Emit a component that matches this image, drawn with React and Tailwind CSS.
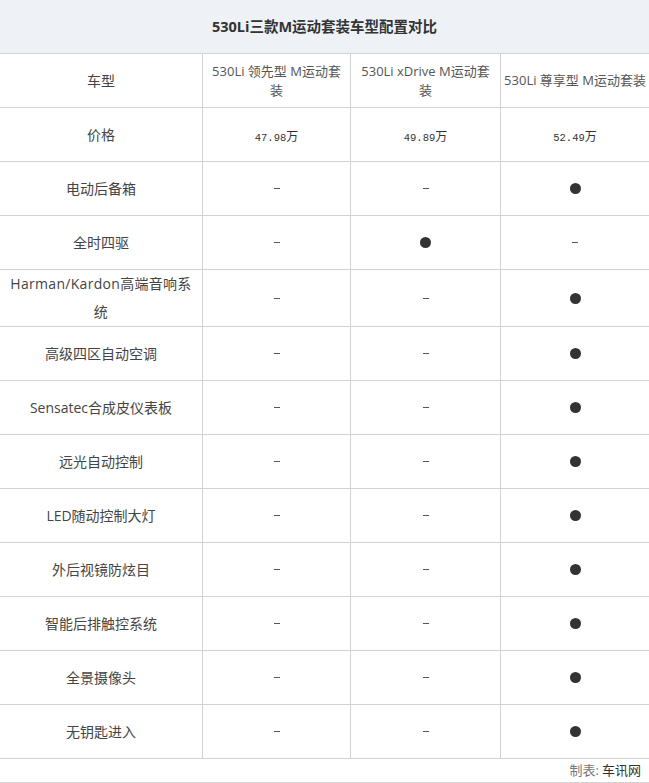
import React from 'react';

const cjk = { fontFamily: '"Open Sans", "Noto Sans CJK SC", sans-serif' };

const Dash = () => <span className="inline-block w-[6px] h-px bg-[#555]" />;
const Dot = () => <span className="inline-block w-[11px] h-[11px] rounded-full bg-[#333]" />;

const rows = [
  { label: '电动后备箱', v: [0, 0, 1] },
  { label: '全时四驱', v: [0, 1, 0] },
  { label: <>Harman/Kardon高端音响系<br />统</>, v: [0, 0, 1], tall: true },
  { label: '高级四区自动空调', v: [0, 0, 1] },
  { label: 'Sensatec合成皮仪表板', v: [0, 0, 1] },
  { label: '远光自动控制', v: [0, 0, 1] },
  { label: 'LED随动控制大灯', v: [0, 0, 1] },
  { label: '外后视镜防炫目', v: [0, 0, 1] },
  { label: '智能后排触控系统', v: [0, 0, 1] },
  { label: '全景摄像头', v: [0, 0, 1] },
  { label: '无钥匙进入', v: [0, 0, 1] },
];

const Row = ({ h = 'h-[54px]', children }) => (
  <div className={`grid grid-cols-[202px_148px_150px_149px] border-b border-[#d2d2d2] ${h}`}>
    {children}
  </div>
);

const Cell = ({ first, children, className = '' }) => (
  <div className={`flex items-center justify-center text-center ${first ? '' : 'border-l border-[#d2d2d2]'} ${className}`}>
    {children}
  </div>
);

const Price = ({ n }) => (
  <span className="text-[#333]">
    <span className="text-[10.5px]" style={{ fontFamily: '"Liberation Mono", monospace' }}>{n}</span>
    <span className="text-[12px]">万</span>
  </span>
);

export default function App() {
  return (
    <div className="w-[649px] bg-white text-[#333]" style={cjk}>
      <div className="h-[54px] bg-[#eef2f7] border-b border-[#d2d2d2] flex items-center justify-center">
        <span className="text-[14.5px] font-bold text-[#333]">530Li三款M运动套装车型配置对比</span>
      </div>

      <Row>
        <Cell first className="text-[14px] text-[#444]">车型</Cell>
        <Cell className="text-[13px] leading-[19px] text-[#555]">530Li 领先型 M运动套<br />装</Cell>
        <Cell className="text-[13px] leading-[19px] text-[#555]">530Li xDrive M运动套<br />装</Cell>
        <Cell className="text-[13px] text-[#555] whitespace-nowrap">530Li 尊享型 M运动套装</Cell>
      </Row>

      <Row>
        <Cell first className="text-[14px] text-[#444]">价格</Cell>
        <Cell><Price n="47.98" /></Cell>
        <Cell><Price n="49.89" /></Cell>
        <Cell><Price n="52.49" /></Cell>
      </Row>

      {rows.map((r, i) => (
        <Row key={i} h={r.tall ? 'h-[57px]' : 'h-[54px]'}>
          <Cell first className={`text-[14px] text-[#444] ${r.tall ? 'leading-[28px] tracking-[0.3px]' : ''}`}>{r.label}</Cell>
          {r.v.map((x, j) => (
            <Cell key={j}>{x ? <Dot /> : <Dash />}</Cell>
          ))}
        </Row>
      ))}

      <div className="h-[24px] border-b border-[#d2d2d2] flex items-center justify-end pr-[8px] text-[13px]">
        <span className="text-[#777]">制表:</span>
        <span className="ml-[3px] text-[#333]">车讯网</span>
      </div>
    </div>
  );
}
